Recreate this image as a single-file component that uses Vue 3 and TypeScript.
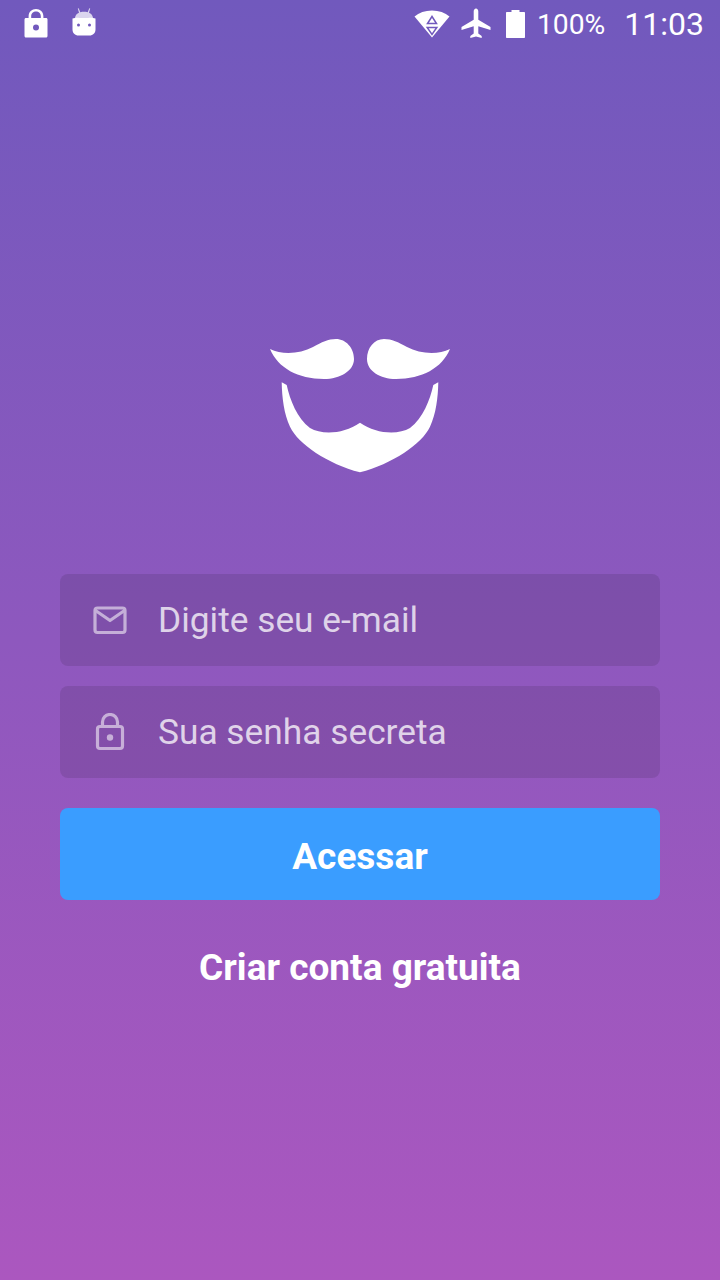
<script setup lang="ts">
const email = 'Digite seu e-mail'
const password = 'Sua senha secreta'
</script>

<template>
  <div class="screen">
    <header class="status-bar">
      <div class="status-left">
        <svg class="lock-status" width="26" height="30" viewBox="0 0 26 30">
          <path fill="#fff" fill-rule="evenodd" d="M3 10h2.600V8.200C5.600 4 8.800 1 13 1s7.400 3 7.400 7.200V10H23c1 0 1.500.6 1.500 1.500V28c0 .9-.6 1.500-1.500 1.500H3c-.9 0-1.500-.6-1.500-1.500V11.500C1.500 10.600 2 10 3 10zM8.200 10h9.600V8.200C17.800 5.500 15.700 3.500 13 3.500S8.200 5.500 8.200 8.200V10zM13 16.500a3 3 0 1 0 0 6 3 3 0 0 0 0-6z" />
        </svg>
        <svg class="android" width="26" height="30" viewBox="0 0 26 30">
          <path fill="#fff" opacity=".75" d="M4 12c.4-3 2-4.500 4-5.200L6.800 2.600 7.700 2.200 9.300 6.300c2.300-.6 5-.6 7.400 0l1.600-4.100.9.400L18 6.800c2 .7 3.600 2.200 4 5.200z" />
          <path fill="#fff" fill-rule="evenodd" d="M1.500 12.500c4-1.500 6-.5 11.500-.5s7.500-1 11.500.5v11c0 3.500-2.500 6-6 6h-11c-3.500 0-6-2.500-6-6zM7.500 17.500a1.500 1.500 0 1 0 0 3 1.500 1.500 0 0 0 0-3zM18.500 17.500a1.500 1.500 0 1 0 0 3 1.500 1.500 0 0 0 0-3z" />
        </svg>
      </div>
      <div class="status-right">
        <svg class="wifi" width="36" height="30" viewBox="0 0 36 30">
          <path fill="#fff" d="M.5 7.500C5 3.500 11 1.500 18 1.500s13 2 17.500 6L18 28.500z" />
          <path fill="none" stroke="#7159bd" stroke-width="1.500" d="M18 7.500l-4.500 7h9zM13.200 18.500h9.600L18 25.500z" />
        </svg>
        <svg class="plane" width="30" height="32" viewBox="0 0 30 32">
          <path fill="#fff" d="M15 .5c1.400 0 2.300 1.400 2.300 3v8.300L29.500 19v3l-12.200-3.800v7.300l3.400 2.500V30L15 28.400 9.300 30v-2l3.400-2.500v-7.300L.5 22v-3l12.200-7.200V3.500c0-1.600.9-3 2.300-3z" />
        </svg>
        <svg class="battery" width="19" height="28" viewBox="0 0 19 28">
          <path fill="#fff" d="M5.500 0h8v2H18c.6 0 1 .4 1 1v24c0 .6-.4 1-1 1H1c-.6 0-1-.4-1-1V3c0-.6.4-1 1-1h4.500z" />
        </svg>
        <span class="percent">100%</span>
        <span class="clock">11:03</span>
      </div>
    </header>

    <main class="login">
      <svg class="logo" width="180" height="135" viewBox="0 0 180 135">
        <path fill="#fff" d="M0 11C12 17 30 16 43 9 52 4 58 1 66 1 76 1 84 10 84 21 84 33 70 41 54 41 28 41 8 30 0 11z" />
        <path fill="#fff" d="M180 11C168 17 150 16 137 9 128 4 122 1 114 1 104 1 97 10 97 21 97 33 110 41 126 41 152 41 172 30 180 11z" />
        <path fill="#fff" d="M11.700 44.300 16.700 47C20 62 27 80 40 90 52 97 74 96 90 84.700 106 96 128 97 140 90 153 80 160 62 163.300 47L168.300 44.300C168 60 166 76 160 88.700 152 106 122 126 90 134.300 58 126 28 106 20 88.700 14 76 12 60 11.700 44.300z" />
      </svg>

      <form class="fields" @submit.prevent>
        <label class="field">
          <svg class="field-icon" width="36" height="30" viewBox="0 0 36 30">
            <rect x="3" y="3" width="30" height="24.500" rx="2.500" fill="none" stroke="#fff" stroke-width="3.200" />
            <path fill="none" stroke="#fff" stroke-width="3.200" stroke-linejoin="round" d="M3.500 5.500 18 15.500 32.500 5.500" />
          </svg>
          <span class="placeholder">{{ email }}</span>
        </label>
        <label class="field">
          <svg class="field-icon" width="36" height="38" viewBox="0 0 36 38">
            <rect x="5.500" y="13.500" width="25" height="22" rx="2.500" fill="none" stroke="#fff" stroke-width="3.200" />
            <path fill="none" stroke="#fff" stroke-width="3.200" d="M10.500 13.500V9a7.500 7.500 0 0 1 15 0v4.500" />
            <circle cx="18" cy="24.500" r="3.200" fill="#fff" />
          </svg>
          <span class="placeholder">{{ password }}</span>
        </label>
        <button class="submit" type="button">Acessar</button>
        <button class="signup" type="button">Criar conta gratuita</button>
      </form>
    </main>
  </div>
</template>

<style scoped>
.screen {
  width: 720px;
  height: 1280px;
  display: flex;
  flex-direction: column;
  background: linear-gradient(180deg, #7159bd 0%, #ab57bf 100%);
  color: #fff;
  font-family: Roboto, "Noto Sans", sans-serif;
  overflow: hidden;
}

.status-bar {
  height: 48px;
  display: flex;
  align-items: center;
  justify-content: space-between;
  padding: 0 16px 0 23px;
  box-sizing: border-box;
}

.status-left,
.status-right {
  display: flex;
  align-items: center;
}

.status-left {
  gap: 22px;
}

.lock-status {
  margin-top: -2px;
}

.android {
  margin-top: -6px;
}

.status-right {
  gap: 10px;
}

.plane {
  margin-left: 1px;
}

.battery {
  margin-left: 5px;
  margin-top: -1px;
}

.percent {
  font-size: 28.300px;
  font-weight: 400;
  margin-left: 2px;
}

.clock {
  font-size: 32px;
  font-weight: 400;
  margin-left: 9px;
}

.login {
  display: flex;
  flex-direction: column;
  align-items: center;
  padding-top: 290px;
}

.logo {
  display: block;
  margin-bottom: 101px;
}

.fields {
  width: 600px;
  display: flex;
  flex-direction: column;
}

.field {
  height: 92px;
  display: flex;
  align-items: center;
  margin-bottom: 20px;
  padding-left: 32px;
  box-sizing: border-box;
  background: rgba(0, 0, 0, 0.1);
  border-radius: 8px;
}

.field-icon {
  opacity: 0.55;
  flex: none;
}

.placeholder {
  margin-left: 30px;
  font-size: 35.300px;
  color: rgba(255, 255, 255, 0.75);
}

.submit,
.signup {
  border: none;
  padding: 0;
  color: #fff;
  font-family: inherit;
  font-size: 37px;
  font-weight: 700;
}

.submit {
  height: 92px;
  margin-top: 10px;
  padding-top: 5px;
  border-radius: 8px;
  background: #3a9dff;
}

.signup {
  margin-top: 45px;
  background: none;
  line-height: 46px;
}
</style>
